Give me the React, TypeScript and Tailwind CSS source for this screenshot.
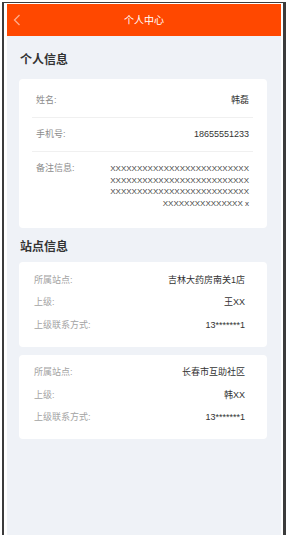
import React from 'react';

const font = { fontFamily: '"Liberation Sans", "Noto Sans CJK SC", sans-serif' };

const stations = [
    { site: '吉林大药房南关1店', boss: '王XX', phone: '13*******1' },
    { site: '长春市互助社区', boss: '韩XX', phone: '13*******1' },
];

const remark = 'X'.repeat(93) + ' x';

const App: React.FC = () => {
    return (
        <div className="w-[290px] h-[535px] bg-white pl-[2px] pt-[2px] overflow-hidden" style={font}>
            <div className="w-[284px] h-[533px] border-l-2 border-t border-r-[3px] border-[#3c3c3c] bg-white pl-[3px] pr-[2px] pt-px flex">
                <div className="flex-1 bg-[#eff2f7] flex flex-col">
                    <div className="relative h-[32px] bg-[#ff4800] flex items-center justify-center">
                        <svg className="absolute left-[6px] top-[10px]" width="8" height="12" viewBox="0 0 8 12">
                            <polyline points="6.5,1 1.5,6 6.5,11" fill="none" stroke="rgba(255,255,255,0.55)" strokeWidth="1.3" />
                        </svg>
                        <span className="text-[10px] text-white">个人中心</span>
                    </div>

                    <div className="pl-[12px]">
                        <div className="mt-[16px] mb-[11px] pl-px text-[12px] leading-[16px] font-bold text-[#333]">个人信息</div>

                        <div className="w-[248px] bg-white rounded-[4px] pl-[13px] pr-[14px] pt-[6px] pb-[19px]">
                            <div className="h-[33px] px-[4px] flex items-center justify-between border-b border-[#f0f0f0] text-[9px]">
                                <span className="text-[#8c8c8c]">姓名:</span>
                                <span className="text-[#333]">韩磊</span>
                            </div>
                            <div className="h-[34px] px-[4px] flex items-center justify-between border-b border-[#f0f0f0] text-[9px]">
                                <span className="text-[#8c8c8c]">手机号:</span>
                                <span className="text-[#333]">18655551233</span>
                            </div>
                            <div className="pt-[11px] px-[4px] flex justify-between">
                                <span className="text-[9px] leading-[11.5px] text-[#8c8c8c]">备注信息:</span>
                                <span className="w-[140px] text-right break-all text-[8px] leading-[11.5px] text-[#444]">{remark}</span>
                            </div>
                        </div>

                        <div className="mt-[11px] mb-[7px] pl-px text-[12px] leading-[16px] font-bold text-[#333]">站点信息</div>

                        <div className="flex flex-col gap-[8px]">
                            {stations.map((s, i) => (
                                <div key={i} className="w-[248px] bg-white rounded-[4px] pl-[15px] pr-[22px] pt-[7px] pb-[10px] text-[9px]">
                                    <div className="h-[22.5px] flex items-center justify-between">
                                        <span className="text-[#a3a3a3]">所属站点:</span>
                                        <span className="text-[#333]">{s.site}</span>
                                    </div>
                                    <div className="h-[22.5px] flex items-center justify-between">
                                        <span className="text-[#a3a3a3]">上级:</span>
                                        <span className="text-[#333]">{s.boss}</span>
                                    </div>
                                    <div className="h-[22.5px] flex items-center justify-between">
                                        <span className="text-[#a3a3a3]">上级联系方式:</span>
                                        <span className="text-[#333]">{s.phone}</span>
                                    </div>
                                </div>
                            ))}
                        </div>
                    </div>
                </div>
            </div>
        </div>
    );
}

export default App;
